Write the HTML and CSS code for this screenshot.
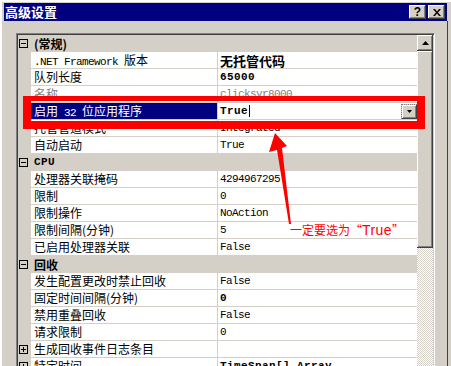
FILE: index.html
```html
<!DOCTYPE html>
<html lang="zh-CN">
<head>
  <meta charset="utf-8">
  <title>高级设置</title>
  <link rel="stylesheet" href="styles.css">
</head>
<body>
  <div class="window">
    <div class="titlebar">
      <span class="title">高级设置</span>
      <div class="caption-btns">
        <span class="cap-btn">?</span>
        <span class="cap-btn">
          <svg width="8" height="7" viewBox="0 0 8 7"><path d="M0 0h2l2 2.5L6 0h2L5 3.5 8 7H6L4 4.5 2 7H0l3-3.5z" fill="#000"/></svg>
        </span>
      </div>
    </div>

    <div class="client">
      <div class="grid">
        <div class="rows">
          <div class="row cat"><span class="margin"><i class="box"></i></span><span class="cat-label">(常规)</span></div>
          <div class="row"><span class="margin"></span><span class="name"><span class="mono">.NET Framework </span>版本</span><span class="value cjk">无托管代码</span></div>
          <div class="row"><span class="margin"></span><span class="name">队列长度</span><span class="value"><b>65000</b></span></div>
          <div class="row dim"><span class="margin"></span><span class="name">名称</span><span class="value">clicksvr8000</span></div>
          <div class="row selected"><span class="margin"></span><span class="name">启用<span class="mono"> 32 </span>位应用程序</span><span class="value"><b>True</b><span class="caret"></span><span class="dd"><svg width="5" height="3" viewBox="0 0 5 3"><path d="M0 0h5L2.5 3z" fill="#000"/></svg></span></span></div>
          <div class="row"><span class="margin"></span><span class="name">托管管道模式</span><span class="value">Integrated</span></div>
          <div class="row"><span class="margin"></span><span class="name">自动启动</span><span class="value">True</span></div>
          <div class="row cat"><span class="margin"><i class="box"></i></span><span class="cat-label mono">CPU</span></div>
          <div class="row"><span class="margin"></span><span class="name">处理器关联掩码</span><span class="value">4294967295</span></div>
          <div class="row"><span class="margin"></span><span class="name">限制</span><span class="value">0</span></div>
          <div class="row"><span class="margin"></span><span class="name">限制操作</span><span class="value">NoAction</span></div>
          <div class="row"><span class="margin"></span><span class="name">限制间隔(分钟)</span><span class="value">5</span></div>
          <div class="row"><span class="margin"></span><span class="name">已启用处理器关联</span><span class="value">False</span></div>
          <div class="row cat"><span class="margin"><i class="box"></i></span><span class="cat-label">回收</span></div>
          <div class="row"><span class="margin"></span><span class="name">发生配置更改时禁止回收</span><span class="value">False</span></div>
          <div class="row"><span class="margin"></span><span class="name">固定时间间隔(分钟)</span><span class="value"><b>0</b></span></div>
          <div class="row"><span class="margin"></span><span class="name">禁用重叠回收</span><span class="value">False</span></div>
          <div class="row"><span class="margin"></span><span class="name">请求限制</span><span class="value">0</span></div>
          <div class="row"><span class="margin"><i class="box plus"></i></span><span class="name">生成回收事件日志条目</span><span class="value"></span></div>
          <div class="row"><span class="margin"><i class="box plus"></i></span><span class="name">特定时间</span><span class="value"><b>TimeSpan[] Array</b></span></div>
        </div>
        <div class="scrollbar">
          <div class="sb-btn"><svg width="7" height="4" viewBox="0 0 7 4"><path d="M3.5 0L7 4H0z" fill="#000"/></svg></div>
          <div class="sb-thumb"></div>
          <div class="sb-track"></div>
        </div>
      </div>
    </div>

    <!-- annotation drawn over the dialog -->
    <div class="overlay">
      <div class="redbox"></div>
      <svg class="arrow" width="451" height="366" viewBox="0 0 451 366">
        <polygon points="275,133 287,146 282,148 291,224 289,224 277,150 269,152" fill="#f00"/>
      </svg>
      <div class="note">一定要选为“<span class="en">True</span>”</div>
    </div>
  </div>
</body>
</html>
```

FILE: styles.css
```css
body {
  margin: 0;
  background: #fff;
  overflow: hidden;
}

.window {
  position: relative;
  width: 451px;
  height: 366px;
  box-sizing: border-box;
  border-top: 2px solid #fff;
  border-left: 2px solid #fff;
  padding: 1px 3px 0 2px;
  background: #d4d0c8;
  overflow: hidden;
  font-family: "Noto Sans CJK SC", sans-serif;
  font-size: 12px;
  color: #000;
}

.titlebar {
  height: 18px;
  margin-right: 1px;
  padding: 0 2px 0 1px;
  background: #000080;
  display: flex;
  align-items: center;
  justify-content: space-between;
}

.title {
  color: #fff;
  font-weight: bold;
  font-size: 13px;
  line-height: 18px;
}

.caption-btns {
  display: flex;
  gap: 2px;
}

.cap-btn {
  width: 17px;
  height: 14px;
  background: #d4d0c8;
  box-shadow: inset -1px -1px #404040, inset 1px 1px #fff, inset -2px -2px #808080;
  display: flex;
  align-items: center;
  justify-content: center;
  font: bold 12px "Liberation Sans", sans-serif;
  line-height: 14px;
}

.client {
  height: 345px;
  padding: 12px 0 0 12px;
  border-right: 1px solid #404040;
}

.grid {
  width: 419px;
  height: 340px;
  box-sizing: border-box;
  border: 1px solid;
  border-color: #808080 #fff #fff #808080;
  padding: 1px;
  box-shadow: inset 1px 1px #404040, inset -1px -1px #d4d0c8;
  background: #fff;
  display: flex;
}

.rows {
  flex: 1;
  overflow: hidden;
}

.row {
  display: flex;
  height: 17px;
}

.margin {
  width: 13px;
  flex: none;
  box-sizing: border-box;
  padding: 4px 0 0 1px;
  background: #d4d0c8;
}

.box {
  display: block;
  position: relative;
  width: 9px;
  height: 9px;
  box-sizing: border-box;
  border: 1px solid #000;
}
.box::before {
  content: "";
  position: absolute;
  left: 1px;
  top: 3px;
  width: 5px;
  height: 1px;
  background: #000;
}
.box.plus::after {
  content: "";
  position: absolute;
  left: 3px;
  top: 1px;
  width: 1px;
  height: 5px;
  background: #000;
}

.name {
  width: 187px;
  flex: none;
  box-sizing: border-box;
  padding-left: 3px;
  border-right: 1px solid #d4d0c8;
  border-bottom: 1px solid #d4d0c8;
  line-height: 16px;
  white-space: nowrap;
  overflow: hidden;
}

.mono {
  font-family: "Liberation Mono", monospace;
  font-size: 11px;
  letter-spacing: -0.6px;
}

.value {
  flex: 1;
  height: 17px;
  box-sizing: border-box;
  padding-left: 2px;
  border-bottom: 1px solid #d4d0c8;
  display: flex;
  align-items: center;
  white-space: pre;
  font-family: "Liberation Mono", monospace;
  font-size: 11px;
  letter-spacing: -0.6px;
}
.value b {
  letter-spacing: 0.4px;
}
.value.cjk {
  font-family: "Noto Sans CJK SC", sans-serif;
  font-size: 13px;
  font-weight: bold;
  letter-spacing: 0;
}

.cat {
  background: #d4d0c8;
}
.cat-label {
  padding-left: 3px;
  font-weight: bold;
  line-height: 17px;
}
.cat-label.mono {
  font-size: 11px;
  letter-spacing: 0.4px;
}

.dim {
  color: #808080;
}

.selected .name {
  background: #000080;
  color: #fff;
}

.caret {
  display: inline-block;
  width: 1px;
  height: 12px;
  margin-left: 1px;
  background: #000;
}

.dd {
  margin-left: auto;
  width: 16px;
  height: 15px;
  box-sizing: border-box;
  border-top: 1px dotted #808080;
  border-left: 1px dotted #808080;
  background: #d4d0c8;
  box-shadow: inset -1px -1px #404040, inset 1px 1px #fff, inset -2px -2px #808080;
  display: flex;
  align-items: center;
  justify-content: center;
}

.scrollbar {
  width: 16px;
  display: flex;
  flex-direction: column;
}

.sb-btn,
.sb-thumb {
  background: #d4d0c8;
  box-shadow: inset -1px -1px #404040, inset 1px 1px #fff, inset -2px -2px #808080;
}

.sb-btn {
  height: 16px;
  display: flex;
  align-items: center;
  justify-content: center;
}

.sb-thumb {
  height: 197px;
}

.sb-track {
  flex: 1;
  background: repeating-conic-gradient(#d4d0c8 0 25%, #fff 0 50%) 0 0 / 2px 2px;
}

.overlay {
  position: absolute;
  left: -2px;
  top: -2px;
  width: 451px;
  height: 366px;
  pointer-events: none;
}

.redbox {
  position: absolute;
  left: 23px;
  top: 96px;
  width: 402px;
  height: 33px;
  box-sizing: border-box;
  border: 8px solid #f00;
  border-top-width: 5px;
}

.arrow {
  position: absolute;
  left: 0;
  top: 0;
}

.note {
  position: absolute;
  left: 290px;
  top: 223px;
  color: #f00;
  font-size: 12px;
  line-height: 14px;
  white-space: nowrap;
}
.note .en {
  font-family: "Liberation Sans", sans-serif;
  font-size: 14px;
  letter-spacing: 0.4px;
}
```
